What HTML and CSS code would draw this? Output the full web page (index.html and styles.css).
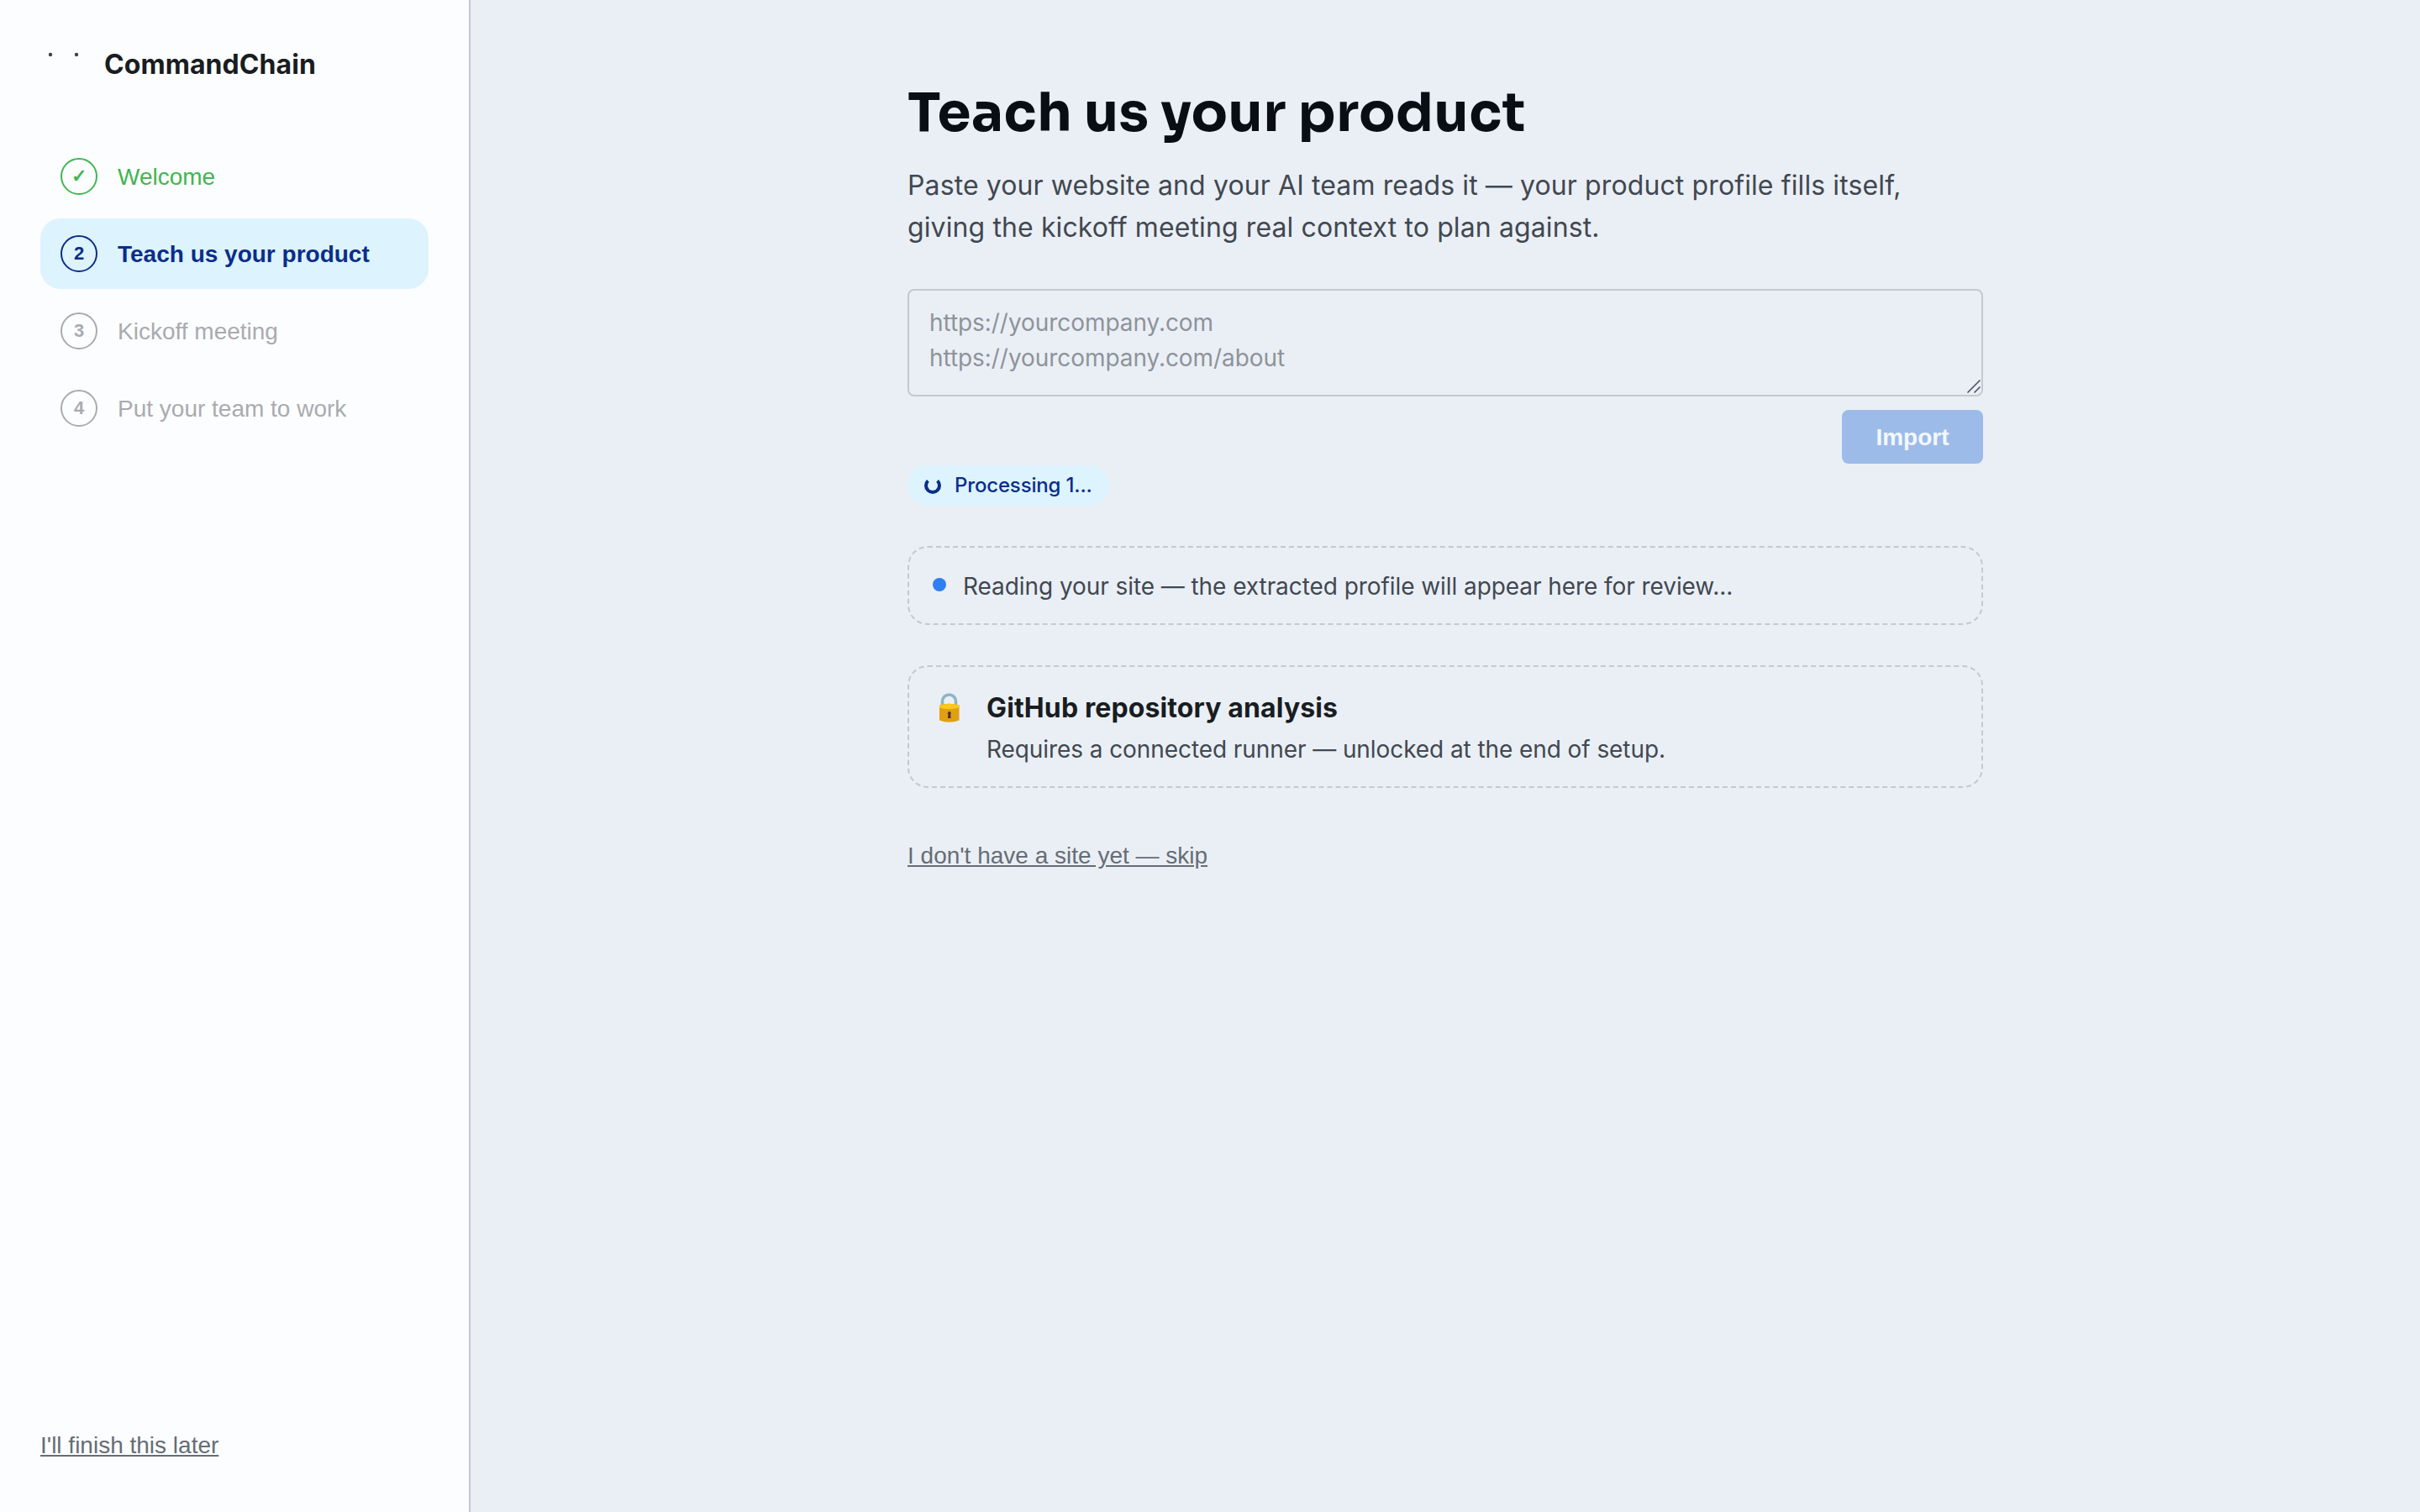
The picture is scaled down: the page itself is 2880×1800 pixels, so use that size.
FILE: index.html
```html
<!DOCTYPE html>
<html lang="en">
<head>
    <meta charset="UTF-8">
    <title>CommandChain - Teach us your product</title>
    <link rel="stylesheet" href="styles.css">
</head>
<body>
    <aside class="sidebar">
        <div class="brand">
            <svg class="brand-logo" width="56" height="56" viewBox="0 0 56 56">
                <circle cx="12" cy="17" r="2.2" fill="#40404c"/>
                <circle cx="43" cy="17" r="2.2" fill="#40404c"/>
            </svg>
            <span class="brand-name">CommandChain</span>
        </div>

        <!-- Onboarding steps -->
        <nav class="steps">
            <div class="step done"><span class="step-num">✓</span><span class="step-label">Welcome</span></div>
            <div class="step active"><span class="step-num">2</span><span class="step-label">Teach us your product</span></div>
            <div class="step"><span class="step-num">3</span><span class="step-label">Kickoff meeting</span></div>
            <div class="step"><span class="step-num">4</span><span class="step-label">Put your team to work</span></div>
        </nav>

        <a class="link finish-later">I'll finish this later</a>
    </aside>

    <main class="main">
        <div class="content">
            <h1>Teach us your product</h1>
            <p class="intro">Paste your website and your AI team reads it — your product profile fills itself, giving the kickoff meeting real context to plan against.</p>

            <form class="import-form">
                <div class="url-field">
                    <textarea class="url-input" placeholder="https://yourcompany.com&#10;https://yourcompany.com/about"></textarea>
                    <svg class="grip" width="18" height="18" viewBox="0 0 18 18">
                        <path d="M1.5 16.5L16.5 1.5M9.5 16.5L16.5 9.5" stroke="#50545c" stroke-width="1.6"/>
                    </svg>
                </div>
                <button type="button" class="import-btn" disabled>Import</button>
            </form>

            <div class="pill"><span class="spinner"></span><span>Processing 1...</span></div>

            <div class="card reading">
                <span class="dot"></span>
                <span class="reading-text">Reading your site — the extracted profile will appear here for review...</span>
            </div>

            <div class="card repo">
                <svg class="lock" width="40" height="36" viewBox="0 0 40 36">
                    <path d="M11.5 17V10a8 8 0 0 1 16 0V17" fill="none" stroke="#8fb4c2" stroke-width="3.6"/>
                    <path d="M8 14.5Q19.5 11 31.5 14.5V32.5Q19.5 37 8 32.5Z" fill="#e0a011"/>
                    <path d="M8 14.5Q19.5 11 31.5 14.5V17.5Q19.5 21 8 17.5Z" fill="#fbc71d"/>
                    <path d="M18.4 25.5a2 2 0 1 1 2.8 0l.5 4.5h-3.8z" fill="#4e342e"/>
                </svg>
                <div>
                    <h2>GitHub repository analysis</h2>
                    <p>Requires a connected runner — unlocked at the end of setup.</p>
                </div>
            </div>

            <a class="link skip">I don't have a site yet — skip</a>
        </div>
    </main>
</body>
</html>
```
FILE: styles.css
```css
* {
    box-sizing: border-box;
}

body {
    margin: 0;
    height: 1800px;
    display: flex;
    font-family: Inter, sans-serif;
    background-color: #eaeff6;
    color: #414850;
}

h1, h2, p {
    margin: 0;
}

.sidebar {
    width: 560px;
    padding: 48px;
    display: flex;
    flex-direction: column;
    background-color: #fcfdff;
    border-right: 2px solid #c5c9cd;
}

.brand {
    display: flex;
    align-items: center;
    gap: 20px;
    height: 56px;
}

.brand-name {
    font-size: 32px;
    font-weight: 700;
    letter-spacing: 0.06px;
    color: #191d21;
}

.steps {
    display: flex;
    flex-direction: column;
    gap: 8px;
    margin-top: 64px;
}

.step {
    height: 84px;
    padding: 0 24px;
    display: flex;
    align-items: center;
    gap: 24px;
    border-radius: 24px;
    font-family: "Liberation Sans", sans-serif;
    font-size: 28px;
    color: #a9abae;
}

.step-num {
    width: 44px;
    height: 44px;
    display: flex;
    align-items: center;
    justify-content: center;
    border: 2px solid currentColor;
    border-radius: 50%;
    padding-bottom: 1px;
    font-size: 22px;
    font-weight: 700;
}

.step-label {
    padding-top: 2px;
}

.step.done {
    color: #42b551;
}

.step.active {
    background-color: #ddf3fe;
    color: #0b2d8a;
    font-weight: 700;
}

.link {
    font-family: "Liberation Sans", sans-serif;
    font-size: 28px;
    line-height: 32px;
    color: #666d75;
    text-decoration: underline;
    align-self: flex-start;
}

.finish-later {
    margin-top: auto;
    margin-bottom: 15px;
}

.main {
    flex: 1;
    display: flex;
    justify-content: center;
    padding-top: 96px;
}

.content {
    width: 1280px;
    display: flex;
    flex-direction: column;
}

h1 {
    padding-top: 2px;
    font-family: Sora, Inter, sans-serif;
    font-size: 64px;
    line-height: 74px;
    font-weight: 700;
    letter-spacing: 0.42px;
    color: #090d14;
}

.intro {
    margin-top: 24px;
    font-size: 32px;
    line-height: 50px;
    letter-spacing: 0.11px;
    padding-right: 40px;
}

.import-form {
    margin-top: 48px;
    display: flex;
    flex-direction: column;
    align-items: flex-end;
    gap: 16px;
}

.url-field {
    position: relative;
    width: 100%;
    height: 128px;
}

.url-input {
    width: 100%;
    height: 128px;
    padding: 17px 24px;
    border: 2px solid #c5c9cd;
    border-radius: 8px;
    background: transparent;
    font-family: Inter, sans-serif;
    font-size: 28px;
    line-height: 42px;
    letter-spacing: -0.06px;
    resize: none;
    overflow: hidden;
}

.url-input::placeholder {
    color: #8e9399;
}

/* Resize handle over the textarea corner */
.grip {
    position: absolute;
    right: 2px;
    bottom: 3px;
}

.import-btn {
    width: 168px;
    height: 64px;
    padding: 2px 0 0;
    border: none;
    border-radius: 8px;
    background-color: #9dbbe9;
    color: #f3f8ff;
    font-family: "Liberation Sans", sans-serif;
    font-size: 28px;
    font-weight: 700;
}

.pill {
    align-self: flex-start;
    margin-top: 2px;
    height: 48px;
    padding: 0 20px 1px;
    display: flex;
    align-items: center;
    gap: 16px;
    border-radius: 24px;
    background-color: #ddf4fe;
    color: #0b2d8a;
    font-size: 24px;
    font-weight: 500;
    letter-spacing: -0.16px;
}

.spinner {
    width: 20px;
    height: 20px;
    border: 4px solid #0b2d8a;
    border-top-color: transparent;
    border-radius: 50%;
}

.card {
    display: flex;
    border: 2px dashed #c5c9cd;
    border-radius: 24px;
}

.reading {
    height: 94px;
    margin-top: 48px;
    padding: 0 28px;
    align-items: center;
    gap: 20px;
    font-size: 28px;
    letter-spacing: -0.07px;
}

.reading-text {
    padding-top: 2px;
}

.dot {
    width: 16px;
    height: 16px;
    margin-bottom: 2px;
    border-radius: 50%;
    background-color: #2f7ff2;
}

.repo {
    height: 146px;
    margin-top: 48px;
    padding: 23px 28px;
    gap: 24px;
}

.lock {
    margin-top: 8px;
}

h2 {
    font-size: 32px;
    line-height: 52px;
    font-weight: 700;
    letter-spacing: 0.12px;
    color: #191d21;
}

.repo p {
    font-size: 28px;
    line-height: 46px;
    letter-spacing: -0.08px;
}

.skip {
    margin-top: 65px;
}
```
